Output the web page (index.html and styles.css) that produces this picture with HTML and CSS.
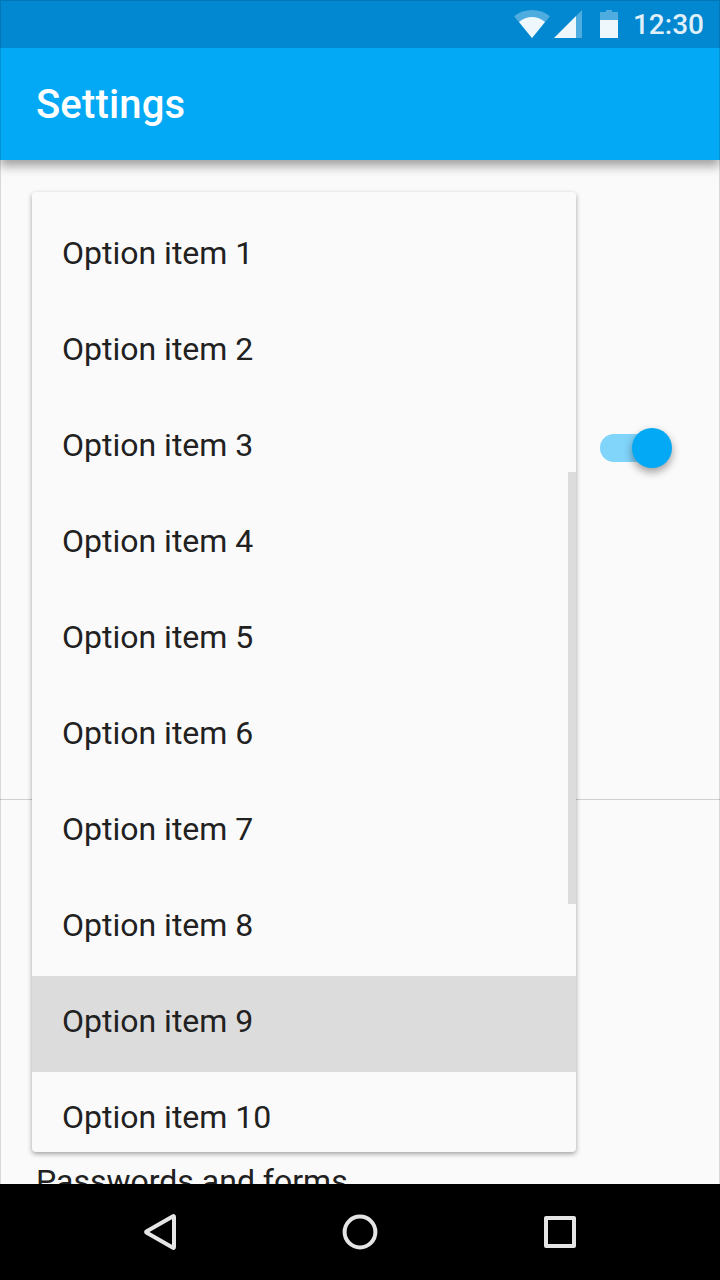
FILE: index.html
```html
<!DOCTYPE html>
<html lang="en">
<head>
  <meta charset="UTF-8" />
  <meta name="viewport" content="width=device-width, initial-scale=1.0" />
  <title>Settings</title>
  <link rel="stylesheet" href="styles.css">
</head>
<body>
  <div class="screen">
    <header class="header">
      <div class="status-bar">
        <svg class="status-icons" width="106" height="30" viewBox="0 0 106 30">
          <!-- wifi -->
          <path d="M0 6.2Q8 0 18 0T36 6.2L18 28Z" fill="#fff" opacity=".3" />
          <path d="M5 12Q11 7 18 7T31 12L18 28Z" fill="#fff" opacity=".9" />
          <!-- signal -->
          <path d="M62 6V28H68V0Z" fill="#fff" opacity=".3" />
          <path d="M40 28L62 6V28Z" fill="#fff" opacity=".93" />
          <!-- battery -->
          <path d="M86 2H92V0H98V2H104V10H86Z" fill="#fff" opacity=".3" />
          <path d="M86 10H104V28H86Z" fill="#fff" opacity=".93" />
        </svg>
        <span class="clock">12:30</span>
      </div>
      <div class="app-bar">
        <h1>Settings</h1>
      </div>
    </header>

    <main class="content">
      <section class="settings-group">
        <div class="switch"><div class="switch-thumb"></div></div>
      </section>
      <section class="settings-list">
        <div class="setting">Passwords and forms</div>
      </section>

      <div class="dropdown">
        <ul class="options">
          <li>Option item 1</li>
          <li>Option item 2</li>
          <li>Option item 3</li>
          <li>Option item 4</li>
          <li>Option item 5</li>
          <li>Option item 6</li>
          <li>Option item 7</li>
          <li>Option item 8</li>
          <li class="selected">Option item 9</li>
          <li>Option item 10</li>
        </ul>
        <div class="scrollbar"></div>
      </div>
    </main>

    <nav class="nav-bar">
      <svg width="40" height="40" viewBox="0 0 40 40">
        <path d="M34 5V35Q34 36.4 32.6 35.6L6.8 20.8Q5.4 20 6.8 19.2L32.6 4.4Q34 3.6 34 5Z" />
      </svg>
      <svg width="40" height="40" viewBox="0 0 40 40">
        <circle cx="20" cy="20" r="15.4" />
      </svg>
      <svg width="40" height="40" viewBox="0 0 40 40">
        <rect x="6" y="6" width="28" height="28" />
      </svg>
    </nav>
  </div>
</body>
</html>
```

FILE: styles.css
```css
* { box-sizing: border-box; }
body {
  margin: 0;
  font-family: Roboto, sans-serif;
  color: #212121;
}
.screen {
  position: relative;
  display: flex;
  flex-direction: column;
  width: 720px;
  height: 1280px;
  overflow: hidden;
  background: #fafafa;
}
/* thin frame around the app */
.screen::after {
  content: "";
  position: absolute;
  z-index: 2;
  inset: 0 0 96px;
  border: 1px solid rgba(0,0,0,0.13);
  border-bottom: none;
}
.header {
  position: relative;
  z-index: 1;
  color: white;
  box-shadow: 0 6px 10px rgba(0,0,0,0.36);
}
.status-bar {
  display: flex;
  justify-content: flex-end;
  height: 48px;
  padding: 10px 16px 0 0;
  background: #0288d1;
}
.status-icons { margin-right: 13px; }
.clock {
  font-size: 28px;
  font-weight: 500;
  line-height: 30px;
  color: rgba(255,255,255,0.88);
}
.app-bar {
  height: 112px;
  padding-left: 36px;
  background: #03a9f4;
}
h1 {
  margin: 0;
  font-size: 40px;
  font-weight: 500;
  line-height: 114px;
  letter-spacing: 0.15px;
}
.content {
  position: relative;
  flex: 1;
  overflow: hidden;
}
.settings-group {
  display: flex;
  justify-content: flex-end;
  height: 640px;
  padding: 274px 48px 0 0;
  border-bottom: 1px solid #cfcfcf;
}
.switch {
  display: flex;
  align-items: center;
  justify-content: flex-end;
  width: 72px;
  height: 28px;
  border-radius: 14px;
  background: linear-gradient(90deg, #81d4fa 52px, transparent 52px);
}
.switch-thumb {
  flex: none;
  width: 40px;
  height: 40px;
  border-radius: 50%;
  background: #03a9f4;
  box-shadow: 0 4px 8px rgba(0,0,0,0.38);
}
.settings-list { padding: 362px 36px 0; }
.setting {
  font-size: 32px;
  line-height: 38px;
}
.dropdown {
  position: absolute;
  top: 32px;
  left: 32px;
  width: 544px;
  height: 960px;
  overflow: hidden;
  border-radius: 4px;
  background: #fafafa;
  box-shadow: 0 2px 5px rgba(0,0,0,0.36);
}
.options {
  margin: 0;
  padding: 16px 0;
  list-style: none;
}
.options li {
  height: 96px;
  padding-left: 30px;
  font-size: 32px;
  line-height: 90px;
}
.options .selected { background: #dcdcdc; }
.scrollbar {
  position: absolute;
  top: 280px;
  right: 0;
  width: 8px;
  height: 432px;
  background: #dcdcdc;
}
.nav-bar {
  display: flex;
  justify-content: center;
  align-items: center;
  gap: 160px;
  height: 96px;
  background: black;
}
.nav-bar svg {
  fill: none;
  stroke: #e5e5e5;
  stroke-width: 4;
  stroke-linejoin: round;
}
```
